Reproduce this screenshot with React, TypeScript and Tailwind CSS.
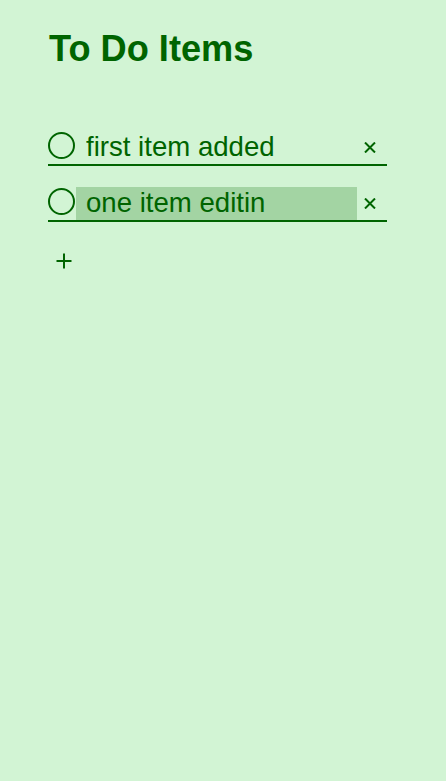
import { useState } from "react"

interface Item {
  id: number
  text: string
}

const green = "#006400"

function CrossIcon() {
  return (
    <svg width="12" height="11" viewBox="0 0 12 11" fill="none">
      <path d="M1 0.5L11 10.5M11 0.5L1 10.5" stroke={green} strokeWidth="2" />
    </svg>
  )
}

function PlusIcon() {
  return (
    <svg width="16" height="16" viewBox="0 0 16 16" fill="none">
      <path d="M8 0.5V15.5M0.5 8H15.5" stroke={green} strokeWidth="2" />
    </svg>
  )
}

export default function App() {
  const [items] = useState<Item[]>([
    { id: 1, text: "first item added" },
    { id: 2, text: "one item editin" },
  ])
  const editing = 2

  return (
    <div
      className="min-h-[781px] w-full bg-[#d2f4d4] text-[#006400] pl-12 pr-[59px] pt-[31px]"
      style={{ fontFamily: '"Liberation Sans", Arial, sans-serif' }}
    >
      <h1 className="ml-px text-[36.2px] leading-[35px] font-bold">To Do Items</h1>

      <ul className="mt-[65px] flex flex-col gap-[21px]">
        {items.map((item) => (
          <li key={item.id} className="flex items-start border-b-2 border-[#006400]">
            {/* toggle */}
            <button className="mt-px mr-px w-[27px] h-[27px] shrink-0 rounded-full border-2 border-[#006400]" />
            <input
              className={`h-[33px] min-w-0 flex-1 pl-[10px] pb-px text-[27.6px] text-[#006400] outline-none ${
                item.id === editing ? "bg-[#a3d4a3]" : "bg-transparent"
              }`}
              defaultValue={item.text}
              readOnly
            />
            <button className="flex h-[33px] w-[30px] shrink-0 items-center justify-center pr-1 pb-px">
              <CrossIcon />
            </button>
          </li>
        ))}
      </ul>

      <button className="mt-[23px] flex h-[31px] w-[31px] items-center justify-center">
        <PlusIcon />
      </button>
    </div>
  )
}
